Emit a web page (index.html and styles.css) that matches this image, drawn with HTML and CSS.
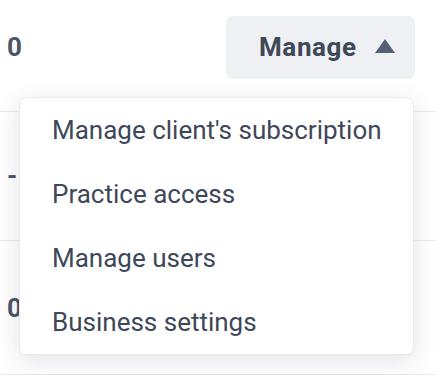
FILE: index.html
```html
<!DOCTYPE html>
<html lang="en">
<head>
  <meta charset="UTF-8" />
  <meta name="viewport" content="width=device-width, initial-scale=1.0"/>
  <title>Clients</title>
  <link rel="stylesheet" href="styles.css">
</head>
<body>
  <div class="table">
    <div class="row">
      <span class="value">0</span>
      <div class="actions">
        <button class="manage-btn">
          <span>Manage</span>
          <svg class="caret" width="20" height="14" viewBox="0 0 20 14"><path d="M10 0 L20 14 L0 14 Z" fill="currentColor"/></svg>
        </button>
        <ul class="menu">
          <li><a href="#">Manage client's subscription</a></li>
          <li><a href="#">Practice access</a></li>
          <li><a href="#">Manage users</a></li>
          <li><a href="#">Business settings</a></li>
        </ul>
      </div>
    </div>
    <div class="row">
      <span class="value">-</span>
    </div>
    <div class="row row-last">
      <span class="value">0</span>
    </div>
  </div>
</body>
</html>
```

FILE: styles.css
```css
body {
  font-family: Roboto, "Liberation Sans", sans-serif;
  margin: 0;
  padding: 0;
  background: #fff;
  color: #3e4858;
  overflow: hidden;
}

.table {
  margin-top: -17px;
}

.row {
  display: flex;
  justify-content: space-between;
  align-items: center;
  height: 128px;
  padding: 0 21px 0 7px;
  border-bottom: 1px solid #e8e9ee;
}

.row-last {
  height: 133px;
}

.value {
  font-size: 26px;
  font-weight: 700;
  color: #4a5568;
}

.actions {
  position: relative;
}

.manage-btn {
  display: flex;
  align-items: center;
  gap: 18px;
  width: 189px;
  height: 63px;
  padding: 0 19px 0 33px;
  background: #eff0f4;
  border: none;
  border-radius: 7px;
  font-family: inherit;
  font-size: 26px;
  font-weight: 700;
  letter-spacing: 0.6px;
  color: #3e4858;
  cursor: pointer;
}

.caret {
  color: #536075;
  margin-top: -2px;
}

.menu {
  position: absolute;
  top: calc(100% + 18px);
  right: 1px;
  width: 393px;
  margin: 0;
  padding: 0;
  list-style: none;
  background: #fff;
  border: 1px solid #e9eaee;
  border-radius: 7px;
  box-shadow: 0 6px 24px rgba(30, 40, 60, 0.13);
  z-index: 10;
}

.menu li a {
  display: flex;
  align-items: center;
  height: 64px;
  padding-left: 32px;
  font-size: 26px;
  color: #3e4858;
  text-decoration: none;
}
```
